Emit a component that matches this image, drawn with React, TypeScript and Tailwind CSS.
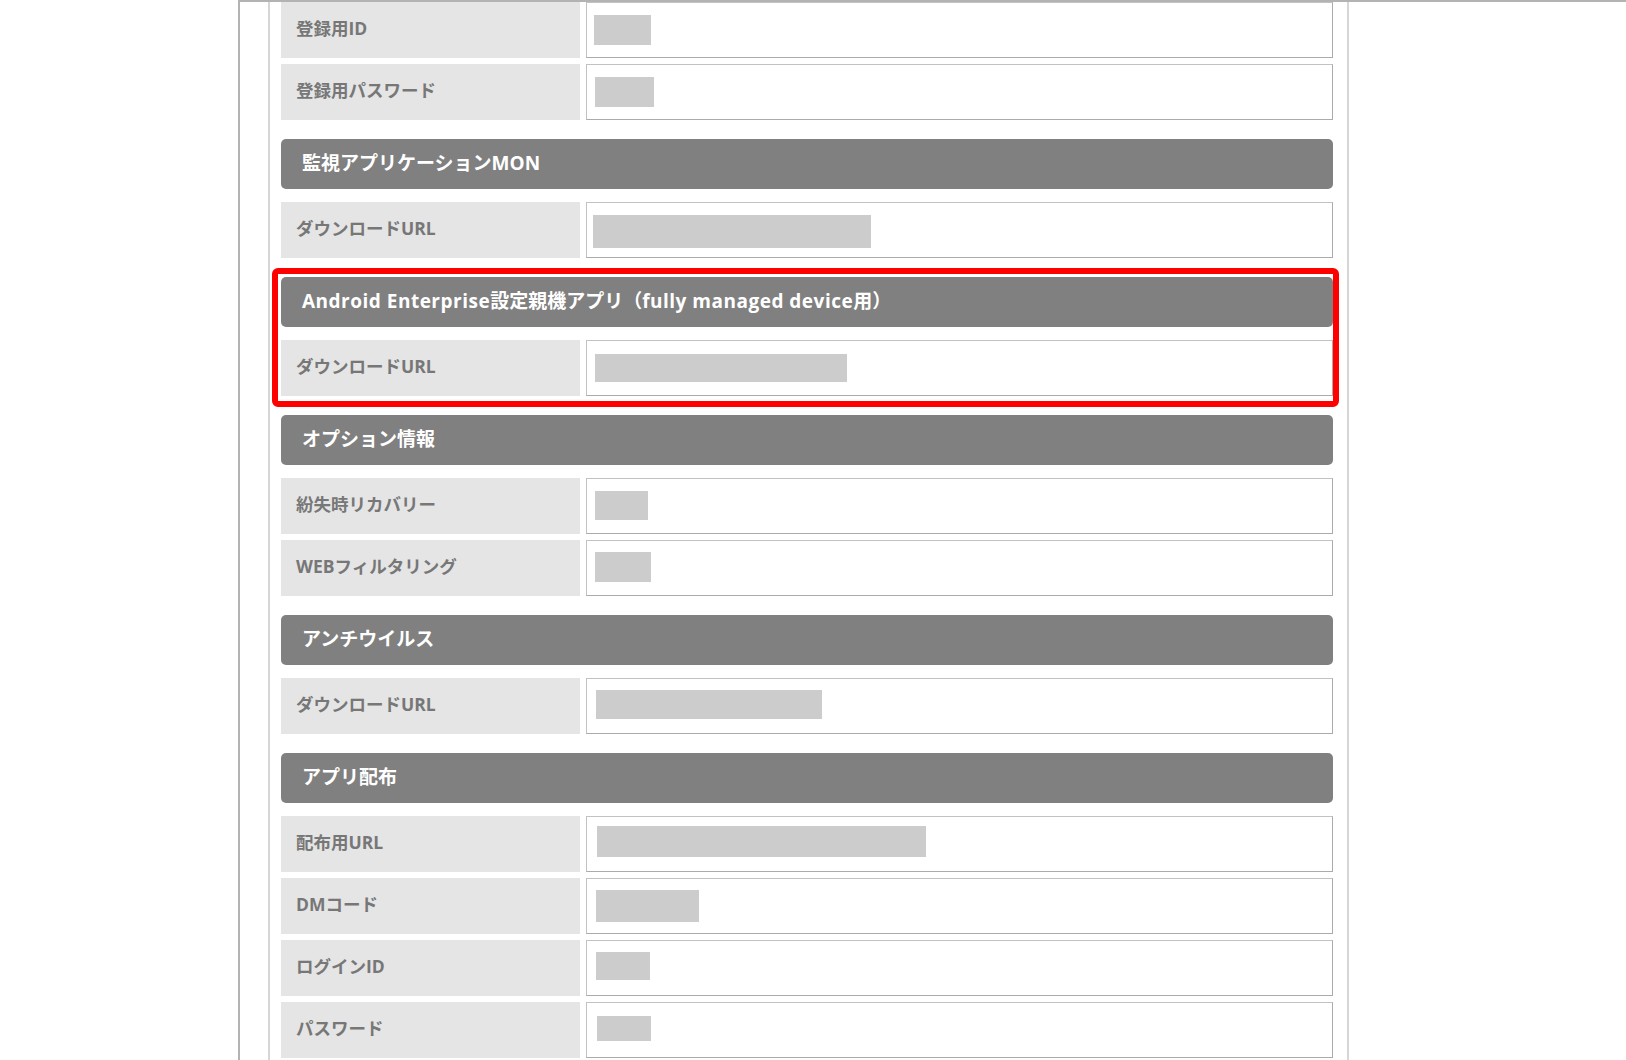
import React from "react";

type RowData = { label: string; block: string };
type SectionData = { title: React.ReactNode; rows: RowData[]; highlight?: boolean };

const topRows: RowData[] = [
  { label: "登録用ID", block: "ml-[7px] mt-[12px] w-[57px] h-[30px]" },
  { label: "登録用パスワード", block: "ml-[8px] mt-[12px] w-[59px] h-[30px]" },
];

const sections: SectionData[] = [
  {
    title: "監視アプリケーションMON",
    rows: [{ label: "ダウンロードURL", block: "ml-[6px] mt-[12px] w-[278px] h-[33px]" }],
  },
  {
    title: (
      <>
        <span className="tracking-[0.5px]">Android Enterprise</span>設定親機アプリ（
        <span className="tracking-[0.5px]">fully managed device</span>用）
      </>
    ),
    highlight: true,
    rows: [{ label: "ダウンロードURL", block: "ml-[8px] mt-[13px] w-[252px] h-[28px]" }],
  },
  {
    title: "オプション情報",
    rows: [
      { label: "紛失時リカバリー", block: "ml-[8px] mt-[12px] w-[53px] h-[29px]" },
      { label: "WEBフィルタリング", block: "ml-[8px] mt-[11px] w-[56px] h-[30px]" },
    ],
  },
  {
    title: "アンチウイルス",
    rows: [{ label: "ダウンロードURL", block: "ml-[9px] mt-[11px] w-[226px] h-[29px]" }],
  },
  {
    title: "アプリ配布",
    rows: [
      { label: "配布用URL", block: "ml-[10px] mt-[9px] w-[329px] h-[31px]" },
      { label: "DMコード", block: "ml-[9px] mt-[11px] w-[103px] h-[32px]" },
      { label: "ログインID", block: "ml-[9px] mt-[11px] w-[54px] h-[28px]" },
      { label: "パスワード", block: "ml-[10px] mt-[13px] w-[54px] h-[25px]" },
    ],
  },
];

function Row({ row }: { row: RowData }) {
  return (
    <div className="flex h-[56px] gap-[6px]">
      <div className="w-[299px] shrink-0 bg-[#e5e5e5] flex items-center pl-[15px] pb-[2px] text-[17.5px] font-bold text-[#777777] leading-none">
        {row.label}
      </div>
      <div className="flex-1 bg-white border border-t-[#c2c2c2] border-l-[#c2c2c2] border-r-[#ababab] border-b-[#ababab]">
        <div className={"bg-[#cccccc] " + row.block} />
      </div>
    </div>
  );
}

function Section({ section }: { section: SectionData }) {
  return (
    <div className="relative mt-[19px]">
      <div className="h-[50px] rounded-[5px] bg-[#808080] flex items-center pl-[21px] pb-[2px] text-[19px] font-bold text-white leading-none whitespace-pre">
        <span>{section.title}</span>
      </div>
      <div className="mt-[13px] flex flex-col gap-[6px]">
        {section.rows.map((r, i) => (
          <Row key={i} row={r} />
        ))}
      </div>
      {section.highlight && (
        <div className="absolute top-[-9px] left-[-9px] right-[-6px] bottom-[-11px] border-[6px] border-[#ff0000] rounded-[6px] pointer-events-none" />
      )}
    </div>
  );
}

export default function App() {
  return (
    <div className="w-[1626px] h-[1060px] bg-white overflow-hidden font-['Open_Sans','Noto_Sans_CJK_JP',sans-serif]">
      <div className="ml-[238px] h-full border-l-2 border-t-2 border-[#b3b3b3]">
        <div className="ml-[28px] w-[1081px] h-full border-l-2 border-r-2 border-[#d6d6d6] pl-[11px] pr-[14px] flex flex-col">
          <div className="flex flex-col gap-[6px]">
            {topRows.map((r, i) => (
              <Row key={i} row={r} />
            ))}
          </div>
          {sections.map((s, i) => (
            <Section key={i} section={s} />
          ))}
        </div>
      </div>
    </div>
  );
}
